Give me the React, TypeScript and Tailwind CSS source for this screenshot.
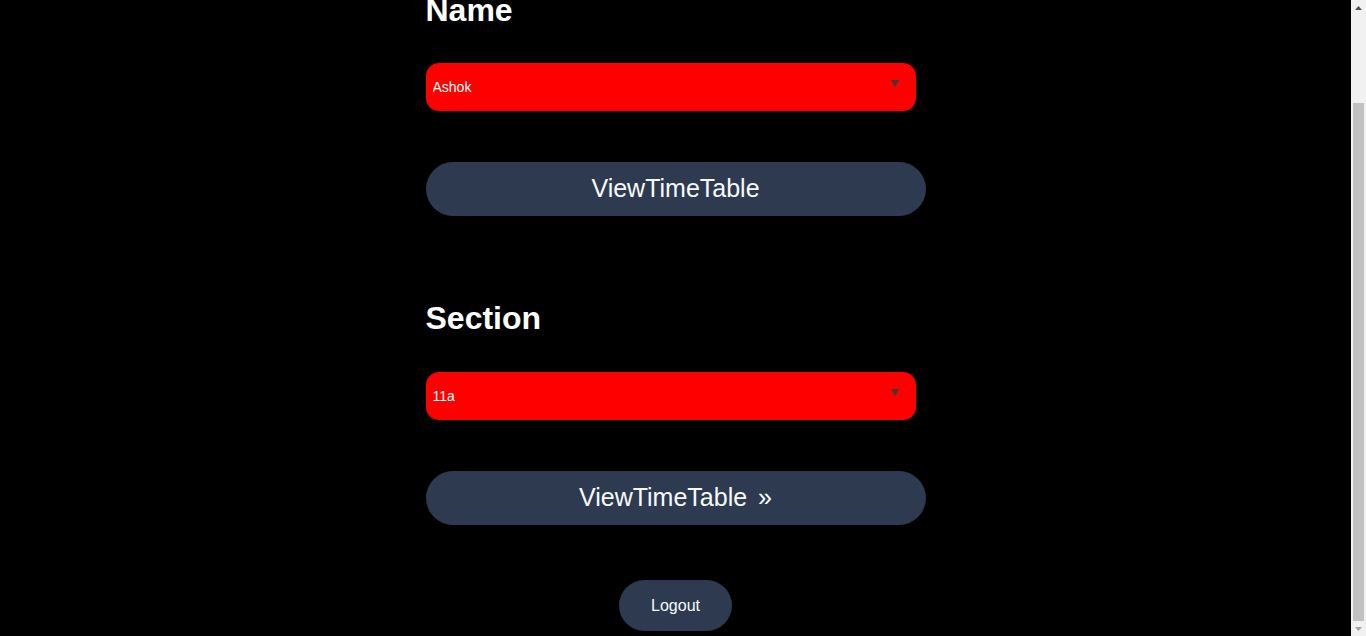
import React from "react";

const font = { fontFamily: '"Liberation Sans", Arial, sans-serif' };

function Select({ value, className }: { value: string; className: string }) {
  return (
    <div className={"relative w-[490px] h-[48px] " + className}>
      <select
        defaultValue={value}
        className="appearance-none w-full h-full bg-[#ff0000] text-white text-[14px] rounded-[13px] pl-[7px] pr-[24px] outline-none"
      >
        <option>{value}</option>
      </select>
      <svg
        className="absolute right-[17px] top-[17px] pointer-events-none"
        width="8"
        height="7"
        viewBox="0 0 8 7"
      >
        <path d="M0 0 H8 L4 7 Z" fill="#3a3a3a" />
      </svg>
    </div>
  );
}

export default function App() {
  return (
    <div className="flex h-[636px] w-full overflow-hidden bg-black text-white" style={font}>
      <div className="flex-1 flex flex-col items-center">
        <div className="w-[500px] flex flex-col">
          <h2 className="mt-[-8px] text-[32px] leading-[37px] font-bold">Name</h2>
          <Select value="Ashok" className="mt-[34px]" />
          <button className="mt-[51px] h-[54px] w-[500px] rounded-full bg-[#2d3a50] text-[25px] text-[#f7fafc]">
            ViewTimeTable
          </button>
          <h2 className="mt-[84px] text-[32px] leading-[37px] font-bold">Section</h2>
          <Select value="11a" className="mt-[35px]" />
          <button className="mt-[51px] h-[54px] w-[500px] rounded-full bg-[#2d3a50] text-[25px] text-[#f7fafc]">
            ViewTimeTable<span className="ml-[11px]">»</span>
          </button>
          <button className="mt-[55px] self-center h-[51px] w-[113px] rounded-full bg-[#2d3a50] text-[16px] text-[#f7fafc]">
            Logout
          </button>
        </div>
      </div>
      <div className="w-[15px] flex-none bg-[#f1f1f1] flex flex-col">
        <div className="h-[15px] flex items-center justify-center">
          <svg width="7" height="4" viewBox="0 0 7 4">
            <path d="M0 4 H7 L3.5 0 Z" fill="#505050" />
          </svg>
        </div>
        <div className="flex-1 px-[2px] pt-[88px]">
          <div className="h-[518px] bg-[#c1c1c1]" />
        </div>
        <div className="h-[15px] flex items-center justify-center">
          <svg width="7" height="4" viewBox="0 0 7 4">
            <path d="M0 0 H7 L3.5 4 Z" fill="#a3a3a3" />
          </svg>
        </div>
      </div>
    </div>
  );
}
